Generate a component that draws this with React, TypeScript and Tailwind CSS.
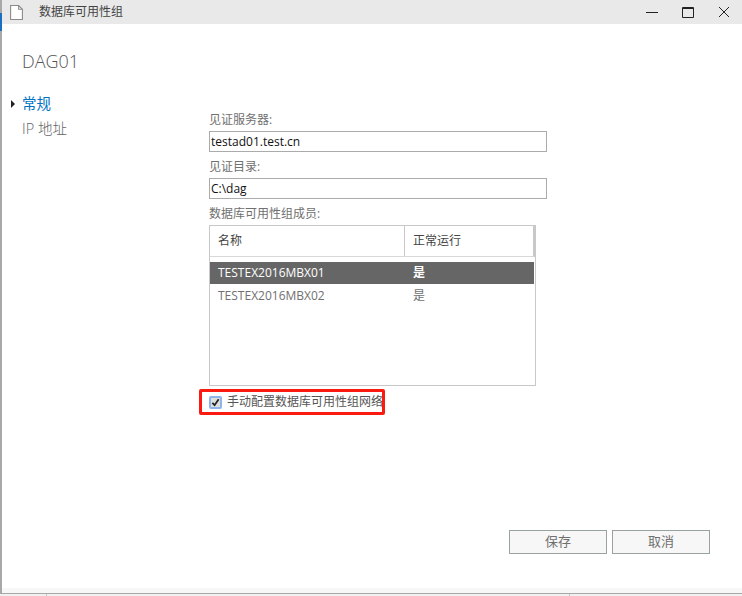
const cjk = { fontFamily: '"Open Sans", "Noto Sans CJK SC", sans-serif' };

const members = [
  { name: "TESTEX2016MBX01", healthy: "是", selected: true },
  { name: "TESTEX2016MBX02", healthy: "是", selected: false },
];

function Field({ label, value }: { label: string; value: string }) {
  return (
    <div className="flex flex-col">
      <label className="h-[22px] text-[12px] leading-[22px] text-[#707070]">{label}</label>
      <input
        readOnly
        value={value}
        className="h-[21px] w-[338px] border border-[#ababab] px-[1px] text-[12px] text-[#111] outline-none"
        style={cjk}
      />
    </div>
  );
}

function App() {
  return (
    <div className="relative flex h-[596px] w-[742px] flex-col overflow-hidden bg-[#f1f1f1]" style={cjk}>
      <span className="absolute left-0 top-[13px] z-10 h-[18px] w-[2px] bg-[#1a6fc0]" />
      <span className="absolute left-[46px] top-[594px] h-[2px] w-px bg-[#c4c4c4]" />
      <span className="absolute left-[569px] top-[594px] h-[2px] w-px bg-[#c4c4c4]" />
      <div className="flex h-[594px] flex-col border-b border-l-2 border-[#a8a8a8] bg-white">
        {/* title bar */}
        <div className="flex h-[24px] shrink-0 items-center bg-[#e9e9e9]">
          <svg viewBox="0 0 12 14" className="ml-[8px] h-[15px] w-[13px]" fill="#fff" stroke="#8a8a8a">
            <path d="M.5.5h7.5l3.5 3.5v9.5H.5z" />
            <path d="M8 .5v3.5h3.5" fill="none" />
          </svg>
          <span className="ml-[16px] text-[12px] text-[#444]">数据库可用性组</span>
          <div className="ml-auto flex items-center">
            <svg viewBox="0 0 12 12" className="h-[12px] w-[12px]" stroke="#222" fill="none">
              <path d="M0 6.5h12" />
            </svg>
            <svg viewBox="0 0 12 11" className="ml-[24px] h-[11px] w-[12px]" stroke="#222" fill="none">
              <path d="M.5.5h11v10H.5z" />
              <path d="M0 1.5h12" />
            </svg>
            <svg viewBox="0 0 12 12" className="ml-[24px] mr-[12px] h-[12px] w-[12px]" stroke="#222" fill="none">
              <path d="M1 1l10 10M11 1L1 11" />
            </svg>
          </div>
        </div>

        <div className="relative flex flex-1 flex-col">
          <h1 className="ml-[20px] mt-[24px] h-[26px] text-[18px] font-light leading-[26px] text-[#555]">DAG01</h1>

          <div className="flex flex-1">
            {/* nav */}
            <nav className="mt-[17px] w-[207px] shrink-0 text-[14.5px]">
              <div className="relative h-[25px] pl-[20px] leading-[26px] text-[#0072c6]">
                <span className="absolute left-[9px] top-[9px] h-0 w-0 border-y-[4px] border-l-[4px] border-y-transparent border-l-[#222]" />
                常规
              </div>
              <div className="h-[26px] pl-[20px] font-light leading-[26px] text-[#666]">IP 地址</div>
            </nav>

            {/* form */}
            <div className="mt-[35px] flex flex-col">
              <Field label="见证服务器:" value="testad01.test.cn" />
              <div className="mt-[4px]">
                <Field label="见证目录:" value="C:\dag" />
              </div>
              <div className="mt-[4px] h-[22px] text-[12px] leading-[22px] text-[#707070]">数据库可用性组成员:</div>

              <div className="h-[161px] w-[327px] border border-[#c8c8c8] text-[12px]">
                <div className="flex h-[31px] border-b border-[#d8d8d8] border-r-2 border-r-[#c8c8c8] text-[#444]">
                  <div className="w-[195px] border-r border-[#c8c8c8] pl-[8px] leading-[30px]">名称</div>
                  <div className="pl-[8px] leading-[30px]">正常运行</div>
                </div>
                <div className="mt-[5px] flex flex-col">
                  {members.map((m) => (
                    <div
                      key={m.name}
                      className={
                        m.selected
                          ? "mb-[1px] mr-[1px] flex h-[22px] bg-[#666] leading-[22px] text-white"
                          : "flex h-[22px] leading-[22px] text-[#707070]"
                      }
                    >
                      <div className="w-[195px] pl-[8px]">{m.name}</div>
                      <div className={m.selected ? "pl-[8px] font-bold" : "pl-[8px]"}>{m.healthy}</div>
                    </div>
                  ))}
                </div>
              </div>

              <label className="relative mt-[9px] flex h-[14px] items-center text-[12px] text-[#555]">
                <span className="flex h-[13px] w-[13px] items-center justify-center rounded-[2px] border-2 border-[#8fb4ea] bg-[#dedede]">
                  <svg viewBox="0 0 10 10" className="h-[9px] w-[9px]" fill="none" stroke="#222" strokeWidth="2">
                    <path d="M1.5 5.5l2.5 2.5 4.5-6.5" />
                  </svg>
                </span>
                <span className="ml-[5px] whitespace-nowrap">手动配置数据库可用性组网络</span>
                <span className="absolute left-[-10px] top-[-6px] h-[26px] w-[186px] rounded-[2px] border-[3px] border-[#fb1a10]" />
              </label>
            </div>
          </div>

          <div className="mb-[34px] mr-[32px] flex justify-end gap-[5px]">
            <button className="h-[24px] w-[98px] border border-[#98a3a1] bg-[#f7f7f7] text-[13px] text-[#707070]">保存</button>
            <button className="h-[24px] w-[98px] border border-[#98a3a1] bg-[#f7f7f7] text-[13px] text-[#707070]">取消</button>
          </div>
          <div className="h-[5px] shrink-0 bg-[#f7f7f7]" />
        </div>
      </div>
    </div>
  );
}

export default App;
